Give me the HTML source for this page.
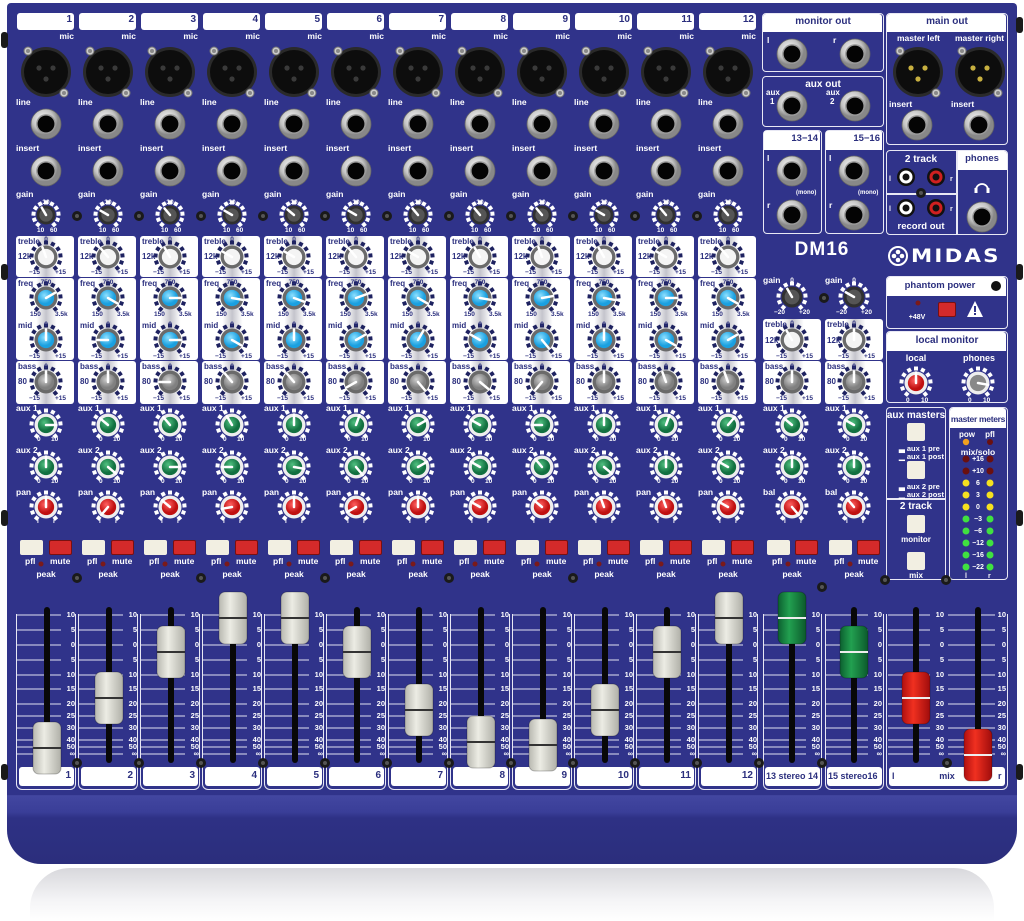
<!DOCTYPE html>
<html><head><meta charset="utf-8"><style>
*{margin:0;padding:0;box-sizing:border-box}
body{width:1024px;height:921px;background:#fff;position:relative;overflow:hidden;font-family:"Liberation Sans",sans-serif;font-weight:bold}
#panel{position:absolute;left:7px;top:3px;width:1010px;height:792px;background:#30338a;border-radius:4px 4px 0 0}
#lip{position:absolute;left:7px;top:792px;width:1010px;height:72px;border-radius:0 0 34px 34px;background:linear-gradient(#2c2f80 0,#4246a0 4px,#3a3e98 20px,#2e3185 26px,#2b2e7c 100%)}
#refl{position:absolute;left:30px;top:868px;width:964px;height:53px;border-radius:40px 40px 0 0;background:linear-gradient(#d8d8dc,#f4f4f6 60%,#fff)}
.b{position:absolute}
.wb{position:absolute;background:#fff;border-radius:3px}
.ob{position:absolute;border:1.5px solid #e8e8f4;border-radius:4px}
.t{position:absolute;color:#fff;font-size:8.5px;line-height:10px;white-space:nowrap}
.d{color:#2b2f7e}
.c{transform:translateX(-50%)}
svg{position:absolute;left:0;top:0}
#txt{position:absolute;left:0;top:0;width:1024px;height:921px}
</style></head><body>
<div id="refl"></div><div id="lip"></div><div id="panel"></div>
<div id="boxes"></div>
<svg id="s" width="1024" height="921"></svg>
<div id="txt"></div>
<script>
var B=document.getElementById('boxes'),T=document.getElementById('txt'),svg='';
function box(cls,x,y,w,h,st){var e=document.createElement('div');e.className=cls;e.style.cssText='left:'+x+'px;top:'+y+'px;width:'+w+'px;height:'+h+'px;'+(st||'');B.appendChild(e);return e}
function t(x,y,s,fs,cls,st){var e=document.createElement('div');e.className='t '+(cls||'');e.style.cssText='left:'+x+'px;top:'+y+'px;'+(fs?'font-size:'+fs+'px;':'')+(st||'');e.textContent=s;T.appendChild(e);return e}
function tr(x,y,s,fs,cls){var e=t(0,y,s,fs,cls);e.style.left='auto';e.style.right=(1024-x)+'px';return e}
function circ(cx,cy,r,f,ex){svg+='<circle cx="'+cx+'" cy="'+cy+'" r="'+r+'" fill="'+f+'" '+(ex||'')+'/>'}
function jack(cx,cy,r){r=r||15;circ(cx,cy,r,'url(#sil)','stroke="#666" stroke-width="0.8"');circ(cx,cy,r*.66,'#9a9a9a');circ(cx,cy,r*.56,'#040404')}
function screw(cx,cy){circ(cx,cy,5,'#1a1a1a');circ(cx,cy,2,'#555')}
function lscrew(cx,cy){circ(cx,cy,4,'#ccc','stroke="#777"');circ(cx,cy,2,'#888')}
function xlr(cx,cy,male){circ(cx,cy,25,'#2a2a2a');circ(cx,cy,22,'#0d0d0d');var c=male?'#c8b040':'#3a3a3a';circ(cx-7,cy-4,2.6,c);circ(cx+7,cy-4,2.6,c);circ(cx,cy+7,2.6,c);lscrew(cx-18,cy-21);lscrew(cx+18,cy+21)}
function knob(cx,cy,r,cap,ang,tick,skirt){
 for(var k=0;k<11;k++){var a=(-140+28*k)*Math.PI/180;var x=cx+Math.sin(a)*(r+3.5),y=cy-Math.cos(a)*(r+3.5);svg+='<rect x="'+(x-2)+'" y="'+(y-2)+'" width="4" height="4" fill="'+tick+'" transform="rotate('+(-140+28*k)+' '+x+' '+y+')"/>'}
 circ(cx,cy,r+.5,skirt||'#3c3c3c');circ(cx,cy,r*.74,cap);
 var a=ang*Math.PI/180;svg+='<line x1="'+cx+'" y1="'+cy+'" x2="'+(cx+Math.sin(a)*r*.95)+'" y2="'+(cy-Math.cos(a)*r*.95)+'" stroke="#fff" stroke-width="2.5" stroke-linecap="round"/>'}
function led(cx,cy,c,r){circ(cx,cy,r||3,c)}
function fcap(cx,cy,col){var g=col=='r'?'url(#fr)':col=='g'?'url(#fg)':'url(#fw)';svg+='<rect x="'+(cx-14)+'" y="'+(cy-26)+'" width="28" height="52" rx="6" fill="'+g+'" stroke="rgba(0,0,0,.25)"/>';svg+='<line x1="'+(cx-14)+'" y1="'+cy+'" x2="'+(cx+14)+'" y2="'+cy+'" stroke="'+(col=='w'?'#333':'#eee')+'" stroke-width="2"/>'}
var sc=[['10',615],['5',630],['0',645],['5',660],['10',675],['15',689],['20',704],['25',716],['30',728],['40',740],['50',747],['∞',754]];
function scale(x1,x2,nx){for(var i=0;i<sc.length;i++){svg+='<line x1="'+x1+'" y1="'+sc[i][1]+'" x2="'+x2+'" y2="'+sc[i][1]+'" stroke="#e0e0f0" stroke-width="1"/>';tr(nx,sc[i][1]-5,sc[i][0],7.5)}}
function slot(cx){svg+='<rect x="'+(cx-3)+'" y="607" width="6" height="156" rx="3" fill="#080808"/>'}
var aT=[-20,-40,-30,-60,-60,-40,-60,-30,-20,-30,-60,-40],aF=[60,120,90,100,110,70,120,100,80,100,90,120],aM=[0,-90,90,120,0,60,30,-60,140,0,120,60],aA=[90,-50,-40,-30,0,20,60,-60,-90,0,20,40],aP=[0,-140,-50,-100,0,-120,0,-60,-50,-20,-20,-60];
var fy=[748,698,652,618,618,652,710,742,745,710,652,618];
function eqpanels(L,w,rows){rows.forEach(function(r){box('wb',L+1,r[0],w,r[1]-r[0],'background:linear-gradient(90deg,#fff 0,#fff 35%,#c4c4cc 52%,#fff 70%,#fff)')})}
for(var i=0;i<12;i++){
 var L=15+i*62,X=L+31;
 box('wb',L+2,13,57,17);tr(L+57,15,String(i+1),10,'d');
 tr(L+59,31,'mic',8.5);xlr(X,72);
 t(L+1,97,'line');jack(X,124);
 t(L+1,143,'insert');jack(X,171);
 t(L+1,189,'gain');knob(X,215,9,'#555',[-30,-60,-40,-60,-50,-60,-40,-40,-40,-60,-40,-40][i],'#fff','#303030');
 t(X,198,'30',6.5,'c');t(L+22,226,'10',6.5);t(L+35,226,'60',6.5);
 eqpanels(L,58,[[236,277],[278,360],[361,404]]);
 t(L+3,237,'treble',8,'d');t(L+3,252,'12k',8,'d');t(X,235,'0',6.5,'d c');t(L+14,268,'−15',6.5,'d');t(L+40,268,'+15',6.5,'d');knob(X,257,11,'#f4f4f4',aT[i],'#1e2260','#6a6a6a');
 t(L+3,279,'freq',8,'d');t(X,278,'750',6.5,'d c');t(L+15,310,'150',6.5,'d');t(L+40,310,'3.5k',6.5,'d');knob(X,298,11,'url(#bl)',aF[i],'#1e2260','#6a6a6a');
 t(L+3,321,'mid',8,'d');t(X,320,'0',6.5,'d c');t(L+14,352,'−15',6.5,'d');t(L+40,352,'+15',6.5,'d');knob(X,340,11,'url(#bl)',aM[i],'#1e2260','#6a6a6a');
 t(L+3,362,'bass',8,'d');t(L+3,377,'80',8,'d');t(X,362,'0',6.5,'d c');t(L+14,394,'−15',6.5,'d');t(L+40,394,'+15',6.5,'d');knob(X,382,11,'url(#gr)',[0,0,-90,-40,-40,-120,140,130,-140,0,-20,-20][i],'#1e2260','#6a6a6a');
 t(L+1,403,'aux 1');knob(X,425,11,'url(#gn)',aA[i],'#fff','#eee');t(L+22,435,'0',6.5);t(L+36,435,'10',6.5);
 t(L+1,445,'aux 2');knob(X,467,11,'url(#gn)',[0,130,90,-90,100,140,60,-60,-40,130,0,-60][i],'#fff','#eee');t(L+22,477,'0',6.5);t(L+36,477,'10',6.5);
 t(L+1,487,'pan');t(X,488,'c',6.5,'c');knob(X,507,11,'url(#rd)',aP[i],'#fff','#eee');t(L+22,517,'l',6.5);t(L+38,517,'r',6.5);
 box('b',L+5,540,23,15,'background:#f2efe2;border-radius:2px');box('b',L+34,540,23,15,'background:#d42a2a;border-radius:2px;border:1px solid #7a1010');
 t(L+10,556,'pfl');t(L+35,556,'mute');led(L+26,564,'#7a1a1a',2.5);t(X,569,'peak',8.5,'c');
 box('ob',L+1,614,60,176,'border-top:none;border-radius:0 0 6px 6px');
 scale(L+2,L+46,L+60);slot(L+32);
 box('wb',L+4,767,55,19);tr(L+56,771,String(i+1),10,'d');
 fcap(L+32,fy[i],'w');
 if(i>0)screw(L,216);if(i%2==1&&i<11)screw(L,578);
}
[[762,'13−14','13 stereo 14',618,-30,-30,-50,140],[824,'15−16','15 stereo16',652,-60,0,-60,-40]].forEach(function(s,k){
 var L=s[0],X=L+30;
 box('ob',L+1,130,59,104);box('wb',L+2,131,56,19,'border-radius:2px 2px 0 0');tr(L+56,134,s[1],9.5,'d');
 t(L+5,153,'l');jack(X,171);t(L+34,188,'(mono)',6);t(L+5,200,'r');jack(X,215);
 t(L+1,275,'gain');t(X,276,'0',6.5,'c');knob(X,297,10,'#555',s[4],'#fff','#303030');t(L+12,308,'−20',6.5);t(L+37,308,'+20',6.5);
 eqpanels(L,58,[[319,360],[361,404]]);
 t(L+3,320,'treble',8,'d');t(L+3,336,'12k',8,'d');t(X,319,'0',6.5,'d c');t(L+14,352,'−15',6.5,'d');t(L+40,352,'+15',6.5,'d');knob(X,340,11,'#f4f4f4',s[5],'#1e2260','#6a6a6a');
 t(L+3,362,'bass',8,'d');t(L+3,377,'80',8,'d');t(X,362,'0',6.5,'d c');t(L+14,394,'−15',6.5,'d');t(L+40,394,'+15',6.5,'d');knob(X,382,11,'url(#gr)',0,'#1e2260','#6a6a6a');
 t(L+1,403,'aux 1');knob(X,425,11,'url(#gn)',s[6],'#fff','#eee');t(L+22,435,'0',6.5);t(L+36,435,'10',6.5);
 t(L+1,445,'aux 2');knob(X,467,11,'url(#gn)',0,'#fff','#eee');t(L+22,477,'0',6.5);t(L+36,477,'10',6.5);
 t(L+1,487,'bal');t(X,488,'c',6.5,'c');knob(X,507,11,'url(#rd)',s[7],'#fff','#eee');t(L+22,517,'l',6.5);t(L+38,517,'r',6.5);
 box('b',L+5,540,23,15,'background:#f2efe2;border-radius:2px');box('b',L+33,540,23,15,'background:#d42a2a;border-radius:2px;border:1px solid #7a1010');
 t(L+10,556,'pfl');t(L+34,556,'mute');led(L+26,564,'#7a1a1a',2.5);t(X,569,'peak',8.5,'c');
 box('ob',L+1,614,59,176,'border-top:none;border-radius:0 0 6px 6px');
 scale(L+2,L+44,L+58);slot(L+30);
 box('wb',L+3,767,55,19);t(L+4,771,s[2],9,'d');
 fcap(L+30,s[3],'g');
});
screw(824,298);screw(822,587);screw(885,580);
box('ob',762,13,122,59);box('wb',763,14,119,18,'border-radius:3px 3px 0 0');t(823,17,'monitor out',10,'d c');
t(767,35,'l');t(833,35,'r');jack(792,54);jack(855,54);
box('ob',762,76,122,51);t(823,80,'aux out',10,'c');t(766,88,'aux',8);t(770,97,'1',8);t(826,88,'aux',8);t(830,97,'2',8);jack(792,106);jack(855,106);
box('ob',886,13,122,132);box('wb',887,14,119,18,'border-radius:3px 3px 0 0');t(947,17,'main out',10,'d c');
t(897,33,'master left',8.5);t(955,33,'master right',8.5);xlr(918,72,1);xlr(980,72,1);
t(889,99,'insert');t(951,99,'insert');jack(917,125);jack(979,125);
box('ob',886,150,122,85);box('wb',957,151,50,19,'border-radius:0 3px 0 0');t(982,154,'phones',9.5,'d c');
box('b',956,151,1.5,84,'background:#e8e8f4');box('b',887,193,70,1.5,'background:#e8e8f4');
t(921,155,'2 track',10,'c');t(921,222,'record out',9.5,'c');t(889,175,'l',7);t(950,175,'r',7);t(889,205,'l',7);t(950,205,'r',7);
[[906,177,'#fff'],[936,177,'#d02020'],[906,208,'#fff'],[936,208,'#d02020']].forEach(function(r){circ(r[0],r[1],9,'#111');circ(r[0],r[1],6.5,r[2]);circ(r[0],r[1],3.5,'#111')});
screw(921,193);
svg+='<path d="M976 190 a6 6 0 0 1 12 0" stroke="#fff" stroke-width="1.8" fill="none"/><rect x="974.5" y="188" width="3" height="5" fill="#fff"/><rect x="986.5" y="188" width="3" height="5" fill="#fff"/>';
jack(982,217);
t(822,245,'DM16',19,'c','letter-spacing:1px');
circ(898,256,9,'none','stroke="#fff" stroke-width="2"');circ(898,252,2.3,'#fff');circ(898,260,2.3,'#fff');circ(894,256,2.3,'#fff');circ(902,256,2.3,'#fff');
t(911,246,'MIDAS',19,'','letter-spacing:2px;line-height:20px;font-family:\"DejaVu Sans\",sans-serif;font-weight:bold;transform:scaleX(1.12);transform-origin:left');
box('ob',886,276,122,53);box('wb',887,277,119,19,'border-radius:3px 3px 0 0');t(940,281,'phantom power',9.5,'d c');circ(996,286,5,'#111');
led(918,303,'#7a1a1a',2.5);t(917,313,'+48V',7,'c');box('b',938,302,18,15,'background:#d42a2a;border:1px solid #7a1010;border-radius:2px');
svg+='<path d="M975 301 L983 317 L967 317 Z" fill="#fff"/><rect x="974" y="306" width="2" height="6" fill="#30338a"/><rect x="974" y="313" width="2" height="2" fill="#30338a"/>';
box('ob',886,331,122,72);box('wb',887,332,119,19,'border-radius:3px 3px 0 0');t(947,336,'local monitor',10,'d c');
t(916,353,'local',9,'c');t(979,353,'phones',9,'c');knob(916,383,11,'url(#rd)',0,'#fff','#eee');knob(978,383,11,'#888',100,'#fff','#eee');
t(906,396,'0',6.5);t(921,396,'10',6.5);t(968,396,'0',6.5);t(983,396,'10',6.5);
box('ob',886,407,60,173);t(916,411,'aux masters',10,'c');
box('b',907,423,18,18,'background:#f2efe2;border-radius:2px');t(899,444,'▃ aux 1 pre',7.5);t(899,452,'▁ aux 1 post',7.5);
box('b',907,461,18,18,'background:#f2efe2;border-radius:2px');t(899,482,'▃ aux 2 pre',7.5);t(899,490,'▁ aux 2 post',7.5);
box('b',887,498,58,1.5,'background:#e8e8f4');t(916,502,'2 track',10,'c');box('b',907,515,18,18,'background:#f2efe2;border-radius:2px');t(916,535,'monitor',8,'c');
box('b',907,552,18,18,'background:#f2efe2;border-radius:2px');t(916,571,'mix',8,'c');
box('ob',949,407,59,173);box('wb',950,408,56,20,'border-radius:3px 3px 0 0');t(978,414,'master meters',8.5,'d c','letter-spacing:-0.3px');
t(967,430,'pow',8,'c');t(990,430,'pfl',8,'c');led(966,442,'#f0a020',3.2);led(990,442,'#6a1010',3);t(978,447,'mix/solo',8.5,'c');
var ml=[['+16',459,'#6a1010'],['+10',471,'#6a1010'],['6',483,'#f4e020'],['3',495,'#f4e020'],['0',507,'#f4e020'],['−3',519,'#40e040'],['−6',531,'#40e040'],['−12',543,'#40e040'],['−16',555,'#40e040'],['−22',567,'#40e040']];
ml.forEach(function(m){led(966,m[1],m[2],3.5);led(990,m[1],m[2],3.5);t(978,m[1]-4,m[0],7,'c')});t(965,572,'l',7);t(988,572,'r',7);
screw(946,580);
box('ob',886,614,122,176,'border-top:none;border-radius:0 0 6px 6px');
for(var i=0;i<sc.length;i++){svg+='<line x1="888" y1="'+sc[i][1]+'" x2="930" y2="'+sc[i][1]+'" stroke="#e0e0f0"/><line x1="948" y1="'+sc[i][1]+'" x2="995" y2="'+sc[i][1]+'" stroke="#e0e0f0"/>';tr(944,sc[i][1]-5,sc[i][0],7.5);tr(1006,sc[i][1]-5,sc[i][0],7.5)}
slot(916);slot(978);box('wb',889,767,116,19);t(892,771,'l',9,'d');t(947,771,'mix',9,'d c');t(998,771,'r',9,'d');
fcap(916,698,'r');fcap(978,755,'r');screw(947,763);
[40,272,518,772].forEach(function(y){svg+='<rect x="1" y="'+(y-8)+'" width="7" height="16" rx="3" fill="#1a1a1a"/>'});
[25,272,518,772].forEach(function(y){svg+='<rect x="1016" y="'+(y-8)+'" width="7" height="16" rx="3" fill="#1a1a1a"/>'});
[[77,763],[139,763],[201,763],[263,763],[325,763],[387,763],[449,763],[511,763],[573,763],[635,763],[697,763],[759,763],[822,763]].forEach(function(p){screw(p[0],p[1])});
var defs='<defs><radialGradient id="sil" cx="40%" cy="35%"><stop offset="0" stop-color="#fafafa"/><stop offset=".7" stop-color="#c4c4c4"/><stop offset="1" stop-color="#888"/></radialGradient>'+
'<radialGradient id="bl" cx="40%" cy="35%"><stop offset="0" stop-color="#8ee0ff"/><stop offset="1" stop-color="#1aa0e0"/></radialGradient>'+
'<radialGradient id="gn" cx="40%" cy="35%"><stop offset="0" stop-color="#50c080"/><stop offset="1" stop-color="#127040"/></radialGradient>'+
'<radialGradient id="rd" cx="40%" cy="35%"><stop offset="0" stop-color="#ff6060"/><stop offset="1" stop-color="#c01010"/></radialGradient>'+
'<radialGradient id="gr" cx="40%" cy="35%"><stop offset="0" stop-color="#ccc"/><stop offset="1" stop-color="#808080"/></radialGradient>'+
'<linearGradient id="fw" x1="0" x2="1"><stop offset="0" stop-color="#b8b8b0"/><stop offset=".4" stop-color="#ecece4"/><stop offset="1" stop-color="#b0b0a8"/></linearGradient>'+
'<linearGradient id="fg" x1="0" x2="1"><stop offset="0" stop-color="#0c6030"/><stop offset=".4" stop-color="#22a050"/><stop offset="1" stop-color="#0c5a2c"/></linearGradient>'+
'<linearGradient id="fr" x1="0" x2="1"><stop offset="0" stop-color="#b01010"/><stop offset=".4" stop-color="#f03020"/><stop offset="1" stop-color="#a00c0c"/></linearGradient></defs>';
document.getElementById('s').innerHTML=defs+svg;
</script>
</body></html>
